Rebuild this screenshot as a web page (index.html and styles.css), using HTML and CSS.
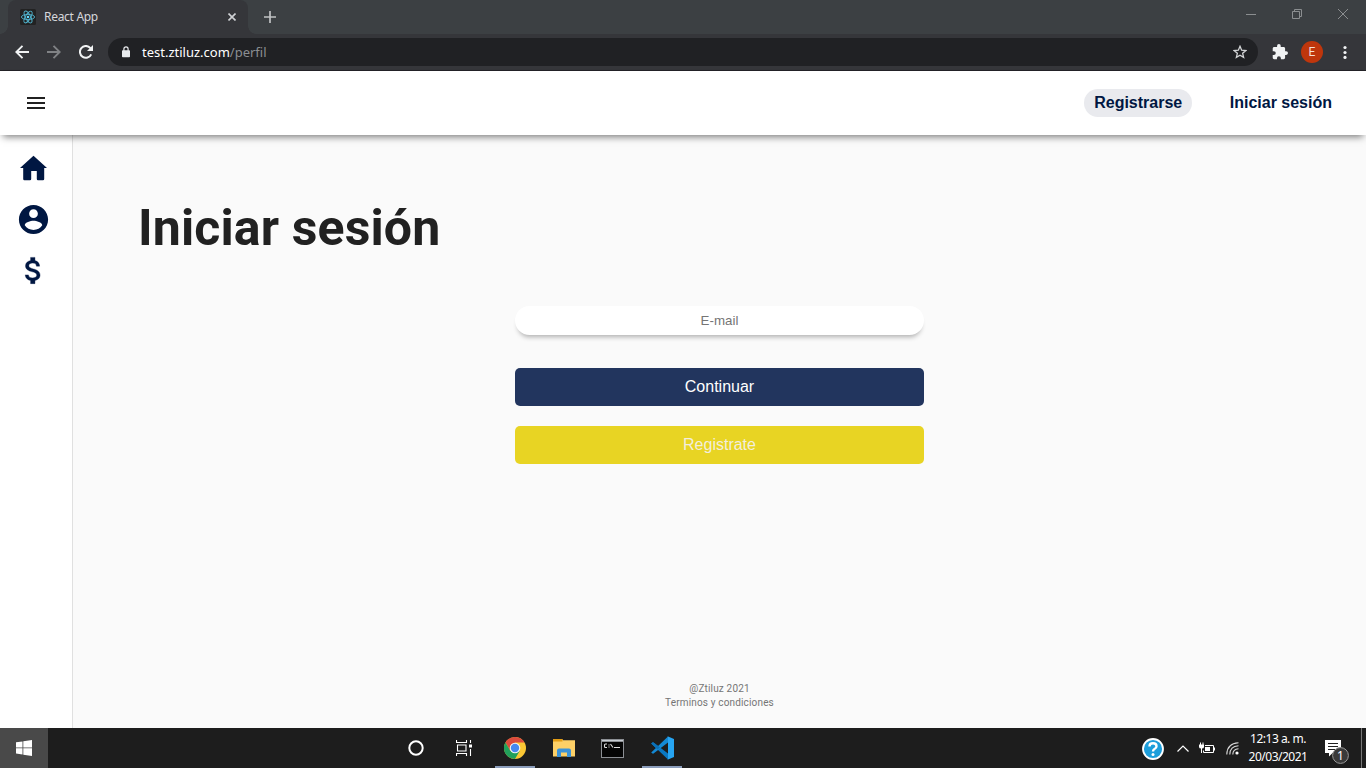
FILE: index.html
```html
<!DOCTYPE html>
<html lang="es">
<head>
<meta charset="utf-8">
<title>React App</title>
<link rel="stylesheet" href="styles.css">
</head>
<body>
<div class="screen">
  <div class="tabstrip">
    <div class="tab">
      <svg class="favicon" width="16" height="16" viewBox="0 0 16 16"><rect width="16" height="16" rx="1.5" fill="#222"/><g fill="none" stroke="#51b4cf" stroke-width=".9"><ellipse cx="8" cy="8" rx="6.6" ry="2.6"/><ellipse cx="8" cy="8" rx="6.6" ry="2.6" transform="rotate(60 8 8)"/><ellipse cx="8" cy="8" rx="6.6" ry="2.6" transform="rotate(120 8 8)"/></g><circle cx="8" cy="8" r="1.3" fill="#61dafb"/></svg>
      <span class="tab-title">React App</span>
      <svg class="tab-close" width="8" height="8" viewBox="0 0 8 8"><path d="M.5.5l7 7M7.5.5l-7 7" stroke="#d0d2d5" stroke-width="1.6"/></svg>
    </div>
    <svg class="new-tab" width="12" height="12" viewBox="0 0 12 12"><path d="M6 0v12M0 6h12" stroke="#c0c2c4" stroke-width="1.7"/></svg>
    <div class="window-controls">
      <svg width="10" height="10" viewBox="0 0 10 10"><path d="M0 5.5h10" stroke="#8b8e90"/></svg>
      <svg width="10" height="10" viewBox="0 0 10 10"><path d="M.5 2.500h7v7h-7zM2.500 2.500V.5h7v7H7.500" fill="none" stroke="#8b8e90"/></svg>
      <svg width="10" height="10" viewBox="0 0 10 10"><path d="M0 0l10 10M10 0L0 10" stroke="#8b8e90"/></svg>
    </div>
  </div>
  <div class="toolbar">
    <svg class="nav" width="14" height="14" viewBox="0 0 14 14"><path d="M14 7H1.500M7.500.8L1.300 7l6.200 6.200" fill="none" stroke="#f1f3f4" stroke-width="1.900"/></svg>
    <svg class="nav forward" width="14" height="14" viewBox="0 0 14 14"><path d="M0 7h12.500M6.500.8L12.700 7l-6.200 6.200" fill="none" stroke="#808285" stroke-width="1.900"/></svg>
    <svg class="nav reload" width="14" height="14" viewBox="0 0 14 14"><path d="M12.200 9.300A5.900 5.900 0 1 1 11.200 2.900L12 3.700" fill="none" stroke="#f1f3f4" stroke-width="2"/><path d="M14 0v6H8z" fill="#f1f3f4"/></svg>
    <div class="address">
      <svg width="8" height="12" viewBox="0 0 8 12"><path d="M1.900 5V3a2.100 2.100 0 0 1 4.200 0v2" fill="none" stroke="#e8eaed" stroke-width="1.200"/><rect y="4.200" width="8" height="7" rx=".8" fill="#e8eaed"/></svg>
      <span class="url">test.ztiluz.com<span class="path">/perfil</span></span>
      <svg class="star" width="14" height="14" viewBox="0 0 14 14"><path d="M7 1.300l1.650 3.900 4.200.35-3.200 2.750.98 4.100L7 10.200l-3.630 2.200.98-4.100-3.200-2.750 4.200-.35z" fill="none" stroke="#d3d5d7" stroke-width="1.300"/></svg>
    </div>
    <svg class="puzzle" width="16" height="16" viewBox="1 1 22 22"><path d="M20.500 11H19V7c0-1.100-.9-2-2-2h-4V3.500a2.500 2.500 0 0 0-5 0V5H4c-1.100 0-2 .9-2 2v3.800h1.500a2.700 2.700 0 0 1 0 5.400H2V20c0 1.100.9 2 2 2h3.800v-1.500a2.700 2.700 0 0 1 5.400 0V22H17c1.100 0 2-.9 2-2v-4h1.500a2.500 2.500 0 0 0 0-5z" fill="#f1f3f4"/></svg>
    <span class="avatar">E</span>
    <svg class="dots" width="4" height="14" viewBox="0 0 4 14"><g fill="#f1f3f4"><circle cx="2" cy="2.500" r="1.600"/><circle cx="2" cy="7.500" r="1.600"/><circle cx="2" cy="12.400" r="1.600"/></g></svg>
  </div>

  <header class="appbar">
    <svg class="menu" width="18" height="12" viewBox="0 0 18 12"><path d="M0 0h18v2H0zM0 5h18v2H0zM0 10h18v2H0z" fill="#212121"/></svg>
    <a class="link pill">Registrarse</a>
    <a class="link">Iniciar sesión</a>
  </header>

  <div class="page">
    <nav class="sidebar">
      <svg width="35" height="35" viewBox="0 0 35 35"><path d="M17.500 4.800L31 17H28.200V28.100a1.200 1.200 0 0 1-1.200 1.200H22a1.200 1.200 0 0 1-1.200-1.200V20H15.200v8.100a1.200 1.200 0 0 1-1.200 1.200H8.400a1.200 1.200 0 0 1-1.200-1.200V17H4z" fill="#001742"/></svg>
      <svg width="35" height="35" viewBox="0 0 24 24"><path d="M12 2C6.480 2 2 6.480 2 12s4.480 10 10 10 10-4.480 10-10S17.520 2 12 2zm0 3c1.660 0 3 1.340 3 3s-1.340 3-3 3-3-1.340-3-3 1.340-3 3-3zm0 14.200c-2.500 0-4.710-1.280-6-3.220.03-1.990 4-3.080 6-3.080 1.990 0 5.970 1.090 6 3.080-1.290 1.940-3.500 3.220-6 3.220z" fill="#001742"/></svg>
      <svg width="35" height="35" viewBox="0 0 24 24"><path d="M11.800 10.900c-2.270-.59-3-1.200-3-2.150 0-1.090 1.010-1.850 2.700-1.850 1.780 0 2.440.85 2.500 2.100h2.210c-.07-1.720-1.120-3.300-3.210-3.810V3h-3v2.160c-1.940.42-3.500 1.680-3.500 3.610 0 2.310 1.910 3.460 4.700 4.130 2.500.6 3 1.480 3 2.410 0 .69-.49 1.790-2.700 1.790-2.060 0-2.870-.92-2.980-2.100h-2.200c.12 2.190 1.760 3.420 3.680 3.830V21h3v-2.150c1.950-.37 3.500-1.500 3.500-3.550 0-2.840-2.430-3.810-4.700-4.400z" fill="#001742" stroke="#001742" stroke-width=".25"/></svg>
    </nav>
    <main class="content">
      <h1>Iniciar sesión</h1>
      <form class="login">
        <input class="email" type="text" placeholder="E-mail">
        <button class="btn primary" type="button">Continuar</button>
        <button class="btn secondary" type="button">Registrate</button>
      </form>
      <footer><div class="copy">@Ztiluz 2021</div><div>Terminos y condiciones</div></footer>
    </main>
  </div>

  <div class="taskbar">
    <div class="start"><svg width="16" height="16" viewBox="0 0 16 16"><path d="M0 2.300L6.500 1.400V7.500H0zM7.300 1.300L16 0v7.500H7.300zM0 8.300h6.500v6.200L0 13.600zM7.300 8.300H16V16l-8.700-1.300z" fill="#fff"/></svg></div>
    <div class="apps">
      <div class="app"><svg width="16" height="16" viewBox="0 0 16 16"><circle cx="8" cy="8" r="6.700" fill="none" stroke="#fff" stroke-width="2"/></svg></div>
      <div class="app taskview"><svg width="16" height="16" viewBox="0 0 16 16"><path d="M.5 0v2.500h10V0M.5 16v-2.500h10V16M1.500 5h8.500v6H1.500zM14.500 0v3M14.500 9v7" fill="none" stroke="#fff" stroke-width="1.100"/><path d="M13 4.500h3v3h-3z" fill="#fff"/></svg></div>
      <div class="app open"><svg width="22" height="22" viewBox="0 0 22 22"><circle cx="11" cy="11" r="11" fill="#fbc734"/><path d="M1.470 5.500A11 11 0 0 1 20.530 5.500H11L6.240 13.750z" fill="#dc4b3e"/><path d="M1.470 5.500A11 11 0 0 0 11 22l4.760-8.250H6.240z" fill="#21a05b"/><circle cx="11" cy="11" r="5.300" fill="#f4f4f4"/><circle cx="11" cy="11" r="4.200" fill="#4688f1"/></svg></div>
      <div class="app"><svg width="22" height="20" viewBox="0 0 22 20"><path d="M0 1.500Q0 1 .5 1H9l1.200 1.300H22V18.500H0z" fill="#fdd067"/><path d="M0 1h9.500v2.500H0z" fill="#e39d15"/><path d="M4 19v-6.500Q4 10.500 6 10.500h10q2 0 2 2V19h-4v-4.500H8V19z" fill="#3c93d8"/></svg></div>
      <div class="app console"><svg width="23" height="19" viewBox="0 0 23 19"><rect x=".5" y=".5" width="22" height="18" fill="#050505" stroke="#8c8f94"/><path d="M1 1h21v1.700H1z" fill="#c7ccd2"/><path d="M6 5H4.500Q3.500 5 3.500 6v1.500q0 1 1 1H6M8 5.500v1M8 7.500v1M9.500 5l2.500 3.500M13 8.500h6" fill="none" stroke="#ddd" stroke-width="1.100"/></svg></div>
      <div class="app open"><svg width="24" height="24" viewBox="0 0 24 24"><path d="M1.200 7.600L2.500 6.500Q3 6.200 3.500 6.600L18 17.500V23.500z" fill="#0a78c2"/><path d="M1.200 16.400L2.500 17.500Q3 17.800 3.500 17.400L18 6.500V.5z" fill="#1489d4"/><path d="M1.200 7.600L2.500 6.500Q3 6.200 3.500 6.600L10 11.500l-2.500 2z" fill="#0a70b8"/><path d="M17.500.2L24 3v18l-6.500 2.800Q18 23 18 22V2Q18 1 17.500.2z" fill="#27a5f2"/></svg></div>
    </div>
    <div class="tray">
      <svg class="help" width="22" height="22" viewBox="0 0 22 22"><circle cx="11" cy="11" r="10" fill="#1d9edb" stroke="#fff" stroke-width="1.800"/><path d="M7.500 8.500Q7.500 5.300 11 5.300t3.500 2.900Q14.500 10 12.500 11 11 11.800 11 13.400" fill="none" stroke="#fff" stroke-width="2.400"/><circle cx="11" cy="16.500" r="1.500" fill="#fff"/></svg>
      <svg class="chevron" width="12" height="7" viewBox="0 0 12 7"><path d="M.5 6.500L6 1l5.500 5.500" fill="none" stroke="#fff" stroke-width="1.200"/></svg>
      <svg class="battery" width="16" height="13" viewBox="0 0 16 13"><path d="M6 3.500h8.500v7h-10v-2M2.500 6v5" fill="none" stroke="#fff"/><path d="M6 5h5v4H6zM15 5.500h1v3h-1zM0 2.500h5V5Q5 6.500 2.500 6.500T0 5zM1 .5h1v2H1zM3.500.5h1v2h-1z" fill="#fff"/></svg>
      <svg class="wifi" width="13" height="13" viewBox="0 0 13 13"><g fill="none" stroke="#d8d8d8" stroke-width="1.100"><path d="M.8 12.500Q1 1.500 12.500.8M3.800 12.500Q4 4.200 12.500 3.800M6.800 12.500Q7 7 12.500 6.800"/></g><circle cx="11" cy="11" r="1.600" fill="#fff"/></svg>
      <div class="clock"><div class="time">12:13 a. m.</div><div class="date">20/03/2021</div></div>
      <svg class="notice" width="26" height="26" viewBox="0 0 26 26"><path d="M1 1h16v13H8.500L5 17.500V14H1z" fill="#fff"/><path d="M4 4.500h10M4 7.500h10M4 10.500h7" stroke="#222"/><circle cx="16.500" cy="16.500" r="7.900" fill="#3a3a3a" stroke="#999"/><text x="16.500" y="20.900" class="count">1</text></svg>
      <span class="edge"></span>
    </div>
  </div>
</div>
</body>
</html>
```
FILE: styles.css
```css
* { box-sizing: border-box; }
body { margin: 0; font-family: Roboto, sans-serif; }
svg { display: block; flex: none; }
.screen { width: 1366px; height: 768px; display: flex; flex-direction: column; overflow: hidden; background: #fafafa; }

.tabstrip { height: 34px; flex: none; display: flex; background: #3c4043; padding-left: 8px; }
.tab { width: 240px; height: 34px; display: flex; align-items: center; background: #35363a; border-radius: 8px 8px 0 0; padding: 0 12px; position: relative; }
.tab::before, .tab::after { content: ""; position: absolute; bottom: 0; width: 8px; height: 8px; }
.tab::before { left: -8px; background: radial-gradient(circle at 0 0, transparent 7.5px, #35363a 8px); }
.tab::after { right: -8px; background: radial-gradient(circle at 100% 0, transparent 7.5px, #35363a 8px); }
.tab-title { margin-left: 8px; font: 12px/16px "Noto Sans", sans-serif; letter-spacing: -.3px; color: #d5d7da; flex: 1; }
.new-tab { margin: 11px 0 0 16px; }
.window-controls { margin: 9px 18px 0 auto; display: flex; gap: 36px; }

.toolbar { height: 37px; flex: none; display: flex; align-items: center; background: #35363a; border-bottom: 1px solid #232227; padding: 0 19px 0 15px; }
.forward { margin-left: 18px; }
.reload { margin-left: 18px; }
.address { height: 28px; width: 1150px; margin-left: 15px; border-radius: 14px; background: #202124; display: flex; align-items: center; padding: 0 11px 0 14px; }
.url { margin-left: 12px; font: 13px/18px "Noto Sans", sans-serif; color: #fff; flex: 1; }
.path { color: #8b8e92; }
.puzzle { margin-left: 14px; }
.avatar { width: 22px; height: 22px; margin-left: 13px; border-radius: 50%; background: #bf360c; color: #f3ddd5; font: 12px/22px Roboto, sans-serif; text-align: center; }
.dots { margin-left: 19.5px; }

.appbar { height: 64px; flex: none; display: flex; align-items: center; background: #fff; padding: 0 24px 0 27px; position: relative; z-index: 1; box-shadow: 0 5px 7px -3px rgba(0,0,0,.5); }
.menu { margin-right: auto; }
.link { font: bold 16px/28px "Liberation Sans", Arial, sans-serif; color: #001742; padding: 0 10px; border-radius: 14px; }
.pill { background: #e9eaee; margin-right: 28px; padding: 0 9.5px 0 10.5px; }

.page { flex: 1; display: flex; min-height: 0; }
.sidebar { width: 73px; background: #fff; border-right: 1px solid #e0e0e0; padding: 16px 0 0 16px; display: flex; flex-direction: column; gap: 16px; }
.content { flex: 1; display: flex; flex-direction: column; align-items: center; background: #fafafa; }
h1 { align-self: flex-start; margin: 64px 0 0 65px; font: bold 50px/58px Roboto, sans-serif; letter-spacing: .13px; color: #212121; }
.login { width: 409px; margin-top: 49px; display: flex; flex-direction: column; }
.email { height: 29px; border: 0; border-radius: 15px; background: #fff; text-align: center; font: 13.333px "Liberation Sans", Arial, sans-serif; box-shadow: 0 5px 5px -3px rgba(0,0,0,.3); }
.email::placeholder { color: #757575; }
.btn { height: 38px; border: 0; border-radius: 5px; font: 16px "Liberation Sans", Arial, sans-serif; color: #fff; padding: 0; }
.primary { background: #22355e; margin-top: 33px; }
.secondary { background: #e8d423; color: #f3eedd; margin-top: 20px; }
footer { margin-top: auto; padding-bottom: 18px; text-align: center; font-size: 10px; line-height: 14px; letter-spacing: .16px; color: #757575; }

.taskbar { height: 40px; flex: none; display: flex; background: #1d1d1d; }
.start { width: 48px; display: flex; align-items: center; justify-content: center; background: #494949; }
.apps { display: flex; gap: 9px; margin-left: 348px; }
.app { width: 40px; display: flex; align-items: center; justify-content: center; }
.taskview { padding-right: 2px; margin-right: 1px; }
.console { padding-right: 2px; }
.open { border-bottom: 2px solid #8b9dbb; padding-top: 2px; }
.tray { margin-left: auto; display: flex; align-items: center; color: #fff; }
.help { margin-top: 2px; }
.chevron { margin-left: 13px; }
.battery { margin-left: 10px; }
.wifi { margin-left: 11px; }
.clock { width: 60px; margin-left: 9px; font: 12px/18px "Noto Sans", sans-serif; letter-spacing: -.5px; text-align: center; white-space: nowrap; padding-bottom: 1px; }
.notice { margin: 8px 0 0 16px; }
.count { font: 12px "Noto Sans", sans-serif; fill: #fff; text-anchor: middle; }
.edge { width: 5px; height: 40px; margin-left: 11px; border-left: 1px solid #777; }
```
